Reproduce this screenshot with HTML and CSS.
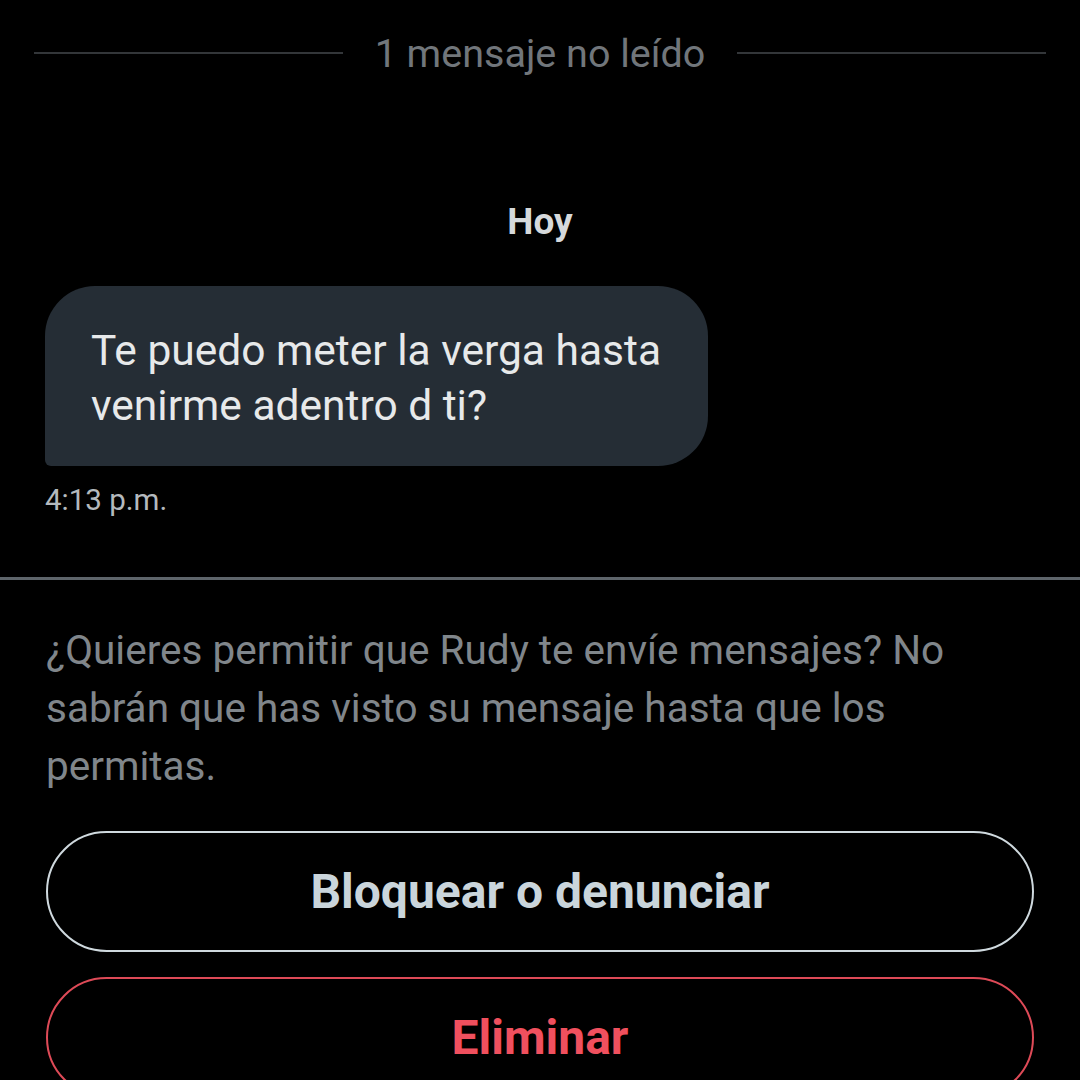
FILE: index.html
```html
<!DOCTYPE html>
<html lang="es">
    <head>
        <meta charset="utf-8">
        <title>Mensajes</title>
        <link rel="stylesheet" href="styles.css">
    </head>
    <body>
        <div class="unread">
            <span class="unread-line"></span>
            <span class="unread-text">1 mensaje no leído</span>
            <span class="unread-line"></span>
        </div>

        <div class="day">Hoy</div>

        <div class="bubble">
            Te puedo meter la verga hasta venirme adentro d ti?
        </div>
        <div class="time">4:13 p.m.</div>

        <div class="divider"></div>

        <div class="request">
            <p class="request-text">¿Quieres permitir que Rudy te envíe mensajes? No sabrán que has visto su mensaje hasta que los permitas.</p>
            <button class="btn btn-block">Bloquear o denunciar</button>
            <button class="btn btn-delete">Eliminar</button>
        </div>
    </body>
</html>
```

FILE: styles.css
```css
body {
    background-color: #000000;
    color: #e7e9ea;
    margin: 0;
    font-family: Roboto, "Noto Sans", sans-serif;
    overflow: hidden;
}

.unread {
    display: flex;
    align-items: center;
    gap: 32px;
    height: 50px;
    margin: 28px 34px 0 34px;
}

.unread-line {
    flex: 1;
    height: 2px;
    background-color: #333639;
}

.unread-text {
    color: #71767b;
    font-size: 39.5px;
}

.day {
    margin-top: 124px;
    text-align: center;
    font-size: 37px;
    line-height: 40px;
    font-weight: bold;
    color: #d6d9db;
}

.bubble {
    box-sizing: border-box;
    width: 663px;
    margin: 44px 0 0 45px;
    padding: 37px 40px 33px 46px;
    background-color: #252d35;
    border-radius: 50px 50px 50px 6px;
    font-size: 42.5px;
    line-height: 55px;
    color: #e7e9ea;
}

.time {
    margin: 17px 0 0 45px;
    font-size: 29.5px;
    line-height: 34px;
    color: #b4b9bd;
}

.divider {
    margin-top: 60px;
    height: 3px;
    background-color: #5e656b;
}

.request {
    display: flex;
    flex-direction: column;
    padding: 0 46px;
}

.request-text {
    margin: 41px 0 0 0;
    font-size: 40.5px;
    line-height: 58px;
    color: #80868b;
}

.btn {
    height: 121px;
    border-radius: 61px;
    background: transparent;
    font-family: Roboto, "Noto Sans", sans-serif;
    font-size: 48px;
    font-weight: bold;
}

.btn-block {
    margin-top: 36px;
    border: 2px solid #cfd9de;
    color: #cad5db;
}

.btn-delete {
    margin-top: 25px;
    border: 2px solid #de4a57;
    color: #f0505e;
}
```
